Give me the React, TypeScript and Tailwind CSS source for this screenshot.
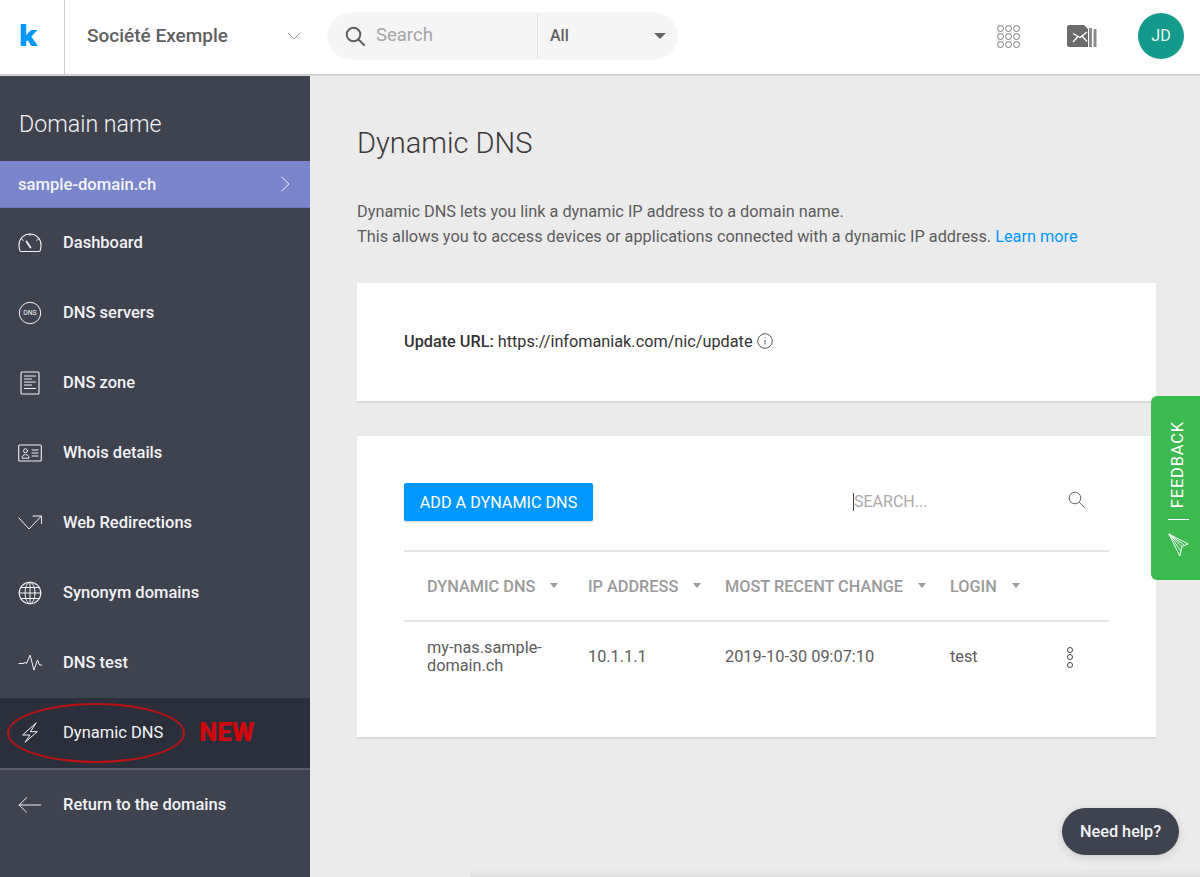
import type { ReactNode } from 'react';

const roboto = { fontFamily: 'Roboto, "Liberation Sans", sans-serif' };

function Svg({ children, className = 'w-6 h-6' }: { children: ReactNode; className?: string }) {
  return (
    <svg viewBox="0 0 24 24" fill="none" stroke="currentColor" strokeWidth="1" strokeLinecap="round" strokeLinejoin="round" className={className}>
      {children}
    </svg>
  );
}

const GaugeIcon = () => (
  <Svg>
    <path d="M3 20.500 A1.200 1.200 0 0 1 1.800 19.500 C1.300 18 1 17 1 14 A11 11 0 0 1 23 14 C23 17 22.700 18 22.200 19.500 A1.200 1.200 0 0 1 21 20.500 Z" strokeWidth="1.1" />
    <path d="M8.500 10.500 L12.500 16.500" strokeWidth="1.8" />
    <path d="M12 3v1.500M4 8.500l1.300 .8M20 8.500l-1.300 .8" />
  </Svg>
);
const DnsIcon = () => (
  <svg viewBox="0 0 24 24" className="w-6 h-6">
    <circle cx="12" cy="12" r="10.700" fill="none" stroke="currentColor" strokeWidth="1" />
    <text x="12" y="14.400" textAnchor="middle" fontSize="6.800" fontWeight="400" fill="currentColor" style={roboto}>DNS</text>
  </svg>
);
const ZoneIcon = () => (
  <Svg>
    <rect x="3" y="1" width="18" height="22" rx="1" strokeWidth="1.1" />
    <path d="M6.500 5h11M6.500 8h7M6.500 11h11M6.500 14h7M6.500 17.500h11" strokeWidth="1.2" />
  </Svg>
);
const WhoisIcon = () => (
  <Svg>
    <rect x="0.7" y="4" width="22.600" height="16" rx="1" strokeWidth="1.1" />
    <circle cx="7.500" cy="9.800" r="2" />
    <path d="M4 16.800c0-2.400 1.700-3.200 3.500-3.200s3.500.8 3.500 3.200z" />
    <path d="M14 9h6M14 12h6M14 15h6" />
  </Svg>
);
const RedirectIcon = () => (
  <Svg>
    <path d="M1 7 11 18 23.500 5" />
    <path d="M15 5h8.500v7.500" />
  </Svg>
);
const GlobeIcon = () => (
  <Svg>
    <circle cx="12" cy="12" r="10.800" strokeWidth="1.1" />
    <ellipse cx="12" cy="12" rx="5" ry="10.800" />
    <path d="M12 1.200v21.600M1.200 12h21.600M2.800 6.500h18.400M2.800 17.500h18.400" />
  </Svg>
);
const PulseIcon = () => (
  <Svg>
    <path d="M1 12.500h4l2-1 1.500 1 3.500-8.500 4 15 3.500-10 2 5h2.500" />
  </Svg>
);
const BoltIcon = () => (
  <Svg>
    <path d="M18 2 4.700 14H12L7 21.300 19.300 10.700h-6.600z" />
  </Svg>
);
const BackIcon = () => (
  <Svg>
    <path d="M1.200 12h21.600M8.500 4.800 1.200 12l7.300 7.200" />
  </Svg>
);

const items = [
  { label: 'Dashboard', icon: <GaugeIcon /> },
  { label: 'DNS servers', icon: <DnsIcon /> },
  { label: 'DNS zone', icon: <ZoneIcon /> },
  { label: 'Whois details', icon: <WhoisIcon /> },
  { label: 'Web Redirections', icon: <RedirectIcon /> },
  { label: 'Synonym domains', icon: <GlobeIcon /> },
  { label: 'DNS test', icon: <PulseIcon /> },
];

function SortHead({ children }: { children: ReactNode }) {
  return (
    <div className="flex items-center gap-[15px]">
      <span>{children}</span>
      <span className="w-0 h-0 border-x-[4.5px] border-x-transparent border-t-[5px] border-t-[#9a9a9a] -mt-[4px]" />
    </div>
  );
}

function Sidebar() {
  return (
    <aside className="relative w-[310px] shrink-0 bg-[#3f424f] text-[#f2f3f5]">
      <div className="h-[86px] pl-[19px] pt-[33px] text-[23.2px] leading-[32px] font-light">Domain name</div>
      <div className="h-[47px] bg-[#7986cb] border-b border-[#6d79b8] flex items-center justify-between pl-[18px] pr-[20px] text-[16.6px] font-medium">
        <span className="mt-[2px]">sample-domain.ch</span>
        <svg viewBox="0 0 10 16" fill="none" stroke="currentColor" strokeWidth="1" className="w-[10px] h-[16px]"><path d="M1.500 1 9 8l-7.500 7" /></svg>
      </div>
      {items.map((item) => (
        <div key={item.label} className="h-[70px] flex items-center pl-[18px] text-[16.5px] font-medium">
          <span className="w-[24px] mr-[21px] flex justify-center">{item.icon}</span>
          <span className="mt-[1px]">{item.label}</span>
        </div>
      ))}
      <div className="h-[70px] bg-[#2b2f3b] flex items-center pl-[18px] text-[16.5px]">
        <span className="w-[24px] mr-[21px] flex justify-center"><BoltIcon /></span>
        <span className="mt-[1px]">Dynamic DNS</span>
      </div>
      <div className="h-[2px] bg-[#5a5d69]" />
      <div className="h-[70px] flex items-center pl-[18px] text-[16.5px] font-medium">
        <span className="w-[24px] mr-[21px] flex justify-center"><BackIcon /></span>
        <span className="mt-[1px]">Return to the domains</span>
      </div>
      <div className="absolute left-[7px] top-[628px] w-[178px] h-[60px] rounded-[50%] border-2 border-[#b81217]" />
      <div className="absolute left-[199px] top-[640px] text-[26px] leading-[34px] font-black text-[#d0080d]">NEW</div>
    </aside>
  );
}

export default function App() {
  return (
    <div className="relative h-[877px] w-[1200px] overflow-hidden bg-[#ebebeb] text-[#444]" style={roboto}>
      <header className="relative z-10 h-[75px] bg-white border-b border-[#c9c9c9] shadow-[0_1px_0_#d8d8d8] flex items-center">
        <div className="w-[65px] h-full border-r border-[#cfcfcf] flex items-center pl-[19px]">
          <span className="text-[30px] leading-none font-black text-[#0098ff] -mt-[2px] scale-x-110 origin-left">k</span>
        </div>
        <div className="w-[238px] -mt-[2px] flex items-center justify-between pl-[22px] pr-[2px] text-[#5f5f5f] text-[19px] font-medium">
          <span>Société Exemple</span>
          <svg viewBox="0 0 14 8" fill="none" stroke="#9a9a9a" strokeWidth="1" className="w-[14px] h-[8px]"><path d="M.8.8 7 7 13.200.8" /></svg>
        </div>
        <div className="ml-[25px] -mt-[2px] w-[349px] h-[46px] rounded-full bg-[#f5f5f5] flex items-center shadow-[0_0_2px_rgba(0,0,0,0.08)]">
          <div className="w-[210px] h-full flex items-center pl-[17px] border-r border-[#e2e2e2] text-[18.5px] text-[#a5a5a5]">
            <svg viewBox="0 0 20 20" fill="none" stroke="#5f5f5f" strokeWidth="2" className="w-[20px] h-[20px] mr-[11px]"><circle cx="8.500" cy="8.500" r="6.800" /><path d="m13.500 13.500 5.500 5.500" strokeLinecap="round" /></svg>
            Search
          </div>
          <div className="flex-1 flex items-center justify-between pl-[12px] pr-[11px] text-[16px] text-[#5f5f5f] font-medium">
            <span>All</span>
            <span className="w-0 h-0 border-x-[6px] border-x-transparent border-t-[6px] border-t-[#666]" />
          </div>
        </div>
        <div className="ml-auto -mt-[2px] flex items-center pr-[16px]">
          <div className="grid grid-cols-3 gap-[1px] mr-[47px]">
            {[...Array(9)].map((_, i) => (
              <span key={i} className="w-[7px] h-[7px] rounded-full border border-[#777]" />
            ))}
          </div>
          <svg viewBox="0 0 30 22" className="w-[30px] h-[22px] mr-[41px]">
            <path d="M0 2a2 2 0 0 1 2-2h15l4 4v18H2a2 2 0 0 1-2-2z" fill="#6b6b6b" />
            <rect x="22" y="3" width="3" height="19" fill="#8b8b8b" />
            <rect x="26.500" y="4" width="3" height="18" fill="#8b8b8b" />
            <path d="M6 8.500 13 12.500 20 7M6 17 11 11.500M20 16.500 15 11" fill="none" stroke="#fff" strokeWidth="1.300" />
          </svg>
          <div className="w-[46px] h-[46px] rounded-full bg-[#139a8c] flex items-center justify-center text-[#e6f5f3] text-[16px]">JD</div>
        </div>
      </header>

      <div className="flex h-[802px]">
        <Sidebar />
        <main className="flex-1 pl-[47px] pr-[44px]">
          <h1 className="pt-[48px] text-[29px] leading-[40px] font-light text-[#3a3a3a]">Dynamic DNS</h1>
          <p className="mt-[37px] text-[16.3px] leading-[24.5px] text-[#5c5c5c]">
            Dynamic DNS lets you link a dynamic IP address to a domain name.<br />
            This allows you to access devices or applications connected with a dynamic IP address. <span className="text-[#0098ff]">Learn more</span>
          </p>
          <section className="mt-[34px] h-[120px] bg-white border-b-2 border-[#d8d8d8] flex items-center pl-[47px] text-[16.25px] text-[#333]">
            <span className="font-medium mr-[4px]">Update URL:</span>
            <span>https://infomaniak.com/nic/update</span>
            <svg viewBox="0 0 16 16" fill="none" stroke="#555" strokeWidth="1" className="w-[16px] h-[16px] ml-[4px] -mt-[2px]">
              <circle cx="8" cy="8" r="7.300" />
              <path d="M8 7v4.500M8 4.300v1" />
            </svg>
          </section>
          <section className="mt-[33px] h-[303px] bg-white border-b-2 border-[#d8d8d8] pl-[47px] pr-[47px] pt-[47px]">
            <div className="flex items-center h-[38px]">
              <div className="w-[189px] h-[38px] pt-[2px] rounded-[2px] bg-[#0098ff] shadow-[0_1px_2px_rgba(0,0,0,0.2)] flex items-center justify-center text-white text-[16.2px]">ADD A DYNAMIC DNS</div>
              <div className="ml-[260px] border-l border-[#444] h-[18px] flex items-center text-[16px] text-[#a9a9a9]">SEARCH...</div>
              <svg viewBox="0 0 18 18" fill="none" stroke="#666" strokeWidth="1" className="w-[18px] h-[18px] ml-[141px] -mt-[4px]">
                <circle cx="7" cy="7" r="5.800" />
                <path d="m11.200 11.200 5.500 5.500" />
              </svg>
            </div>
            <div className="mt-[29px] h-[72px] pt-[2px] border-y-2 border-[#e6e6e6] grid grid-cols-[161px_137px_225px_1fr] items-center pl-[23px] text-[16.3px] text-[#9a9a9a] font-medium">
              <SortHead>DYNAMIC DNS</SortHead>
              <SortHead>IP ADDRESS</SortHead>
              <SortHead>MOST RECENT CHANGE</SortHead>
              <SortHead>LOGIN</SortHead>
            </div>
            <div className="h-[70px] grid grid-cols-[161px_137px_225px_1fr] items-center pl-[23px] text-[16.3px] leading-[18px] text-[#5c5c5c]">
              <span>my-nas.sample-<br />domain.ch</span>
              <span>10.1.1.1</span>
              <span>2019-10-30 09:07:10</span>
              <div className="flex items-center">
                <span>test</span>
                <div className="ml-[89px] flex flex-col gap-[1.5px]">
                  <span className="w-[6px] h-[6px] rounded-full border border-[#444]" />
                  <span className="w-[6px] h-[6px] rounded-full border border-[#444]" />
                  <span className="w-[6px] h-[6px] rounded-full border border-[#444]" />
                </div>
              </div>
            </div>
          </section>
        </main>
      </div>

      <div className="absolute left-[1151px] top-[396px] w-[49px] h-[184px] rounded-l-[6px] bg-[#3cb950] flex flex-col items-center justify-end pb-[23px] pl-[5px] text-white">
        <span className="text-[16.5px] leading-[20px] tracking-[0.8px] [writing-mode:vertical-rl] rotate-180">FEEDBACK</span>
        <div className="w-[21px] h-[1px] bg-white mt-[11px] mb-[13px]" />
        <svg viewBox="0 0 24 24" preserveAspectRatio="none" fill="none" stroke="currentColor" strokeWidth="1" strokeLinejoin="round" className="w-[21px] h-[24px]">
          <path d="M1 1 23 11 16 13.500 13.500 23z" />
          <path d="M1 1 16 13.500M1 1 19 12.300M1 1 14.800 18" />
        </svg>
      </div>

      <div className="absolute left-[1062px] top-[808px] w-[117px] h-[47px] pt-[1px] rounded-full bg-[#3f424f] shadow-[0_2px_8px_rgba(0,0,0,0.15)] flex items-center justify-center text-[16.3px] font-medium text-[#f2f3f5]">Need help?</div>
      <div className="absolute left-[470px] right-0 bottom-0 h-[8px] bg-gradient-to-t from-[#dedede] to-transparent" />
    </div>
  );
}
